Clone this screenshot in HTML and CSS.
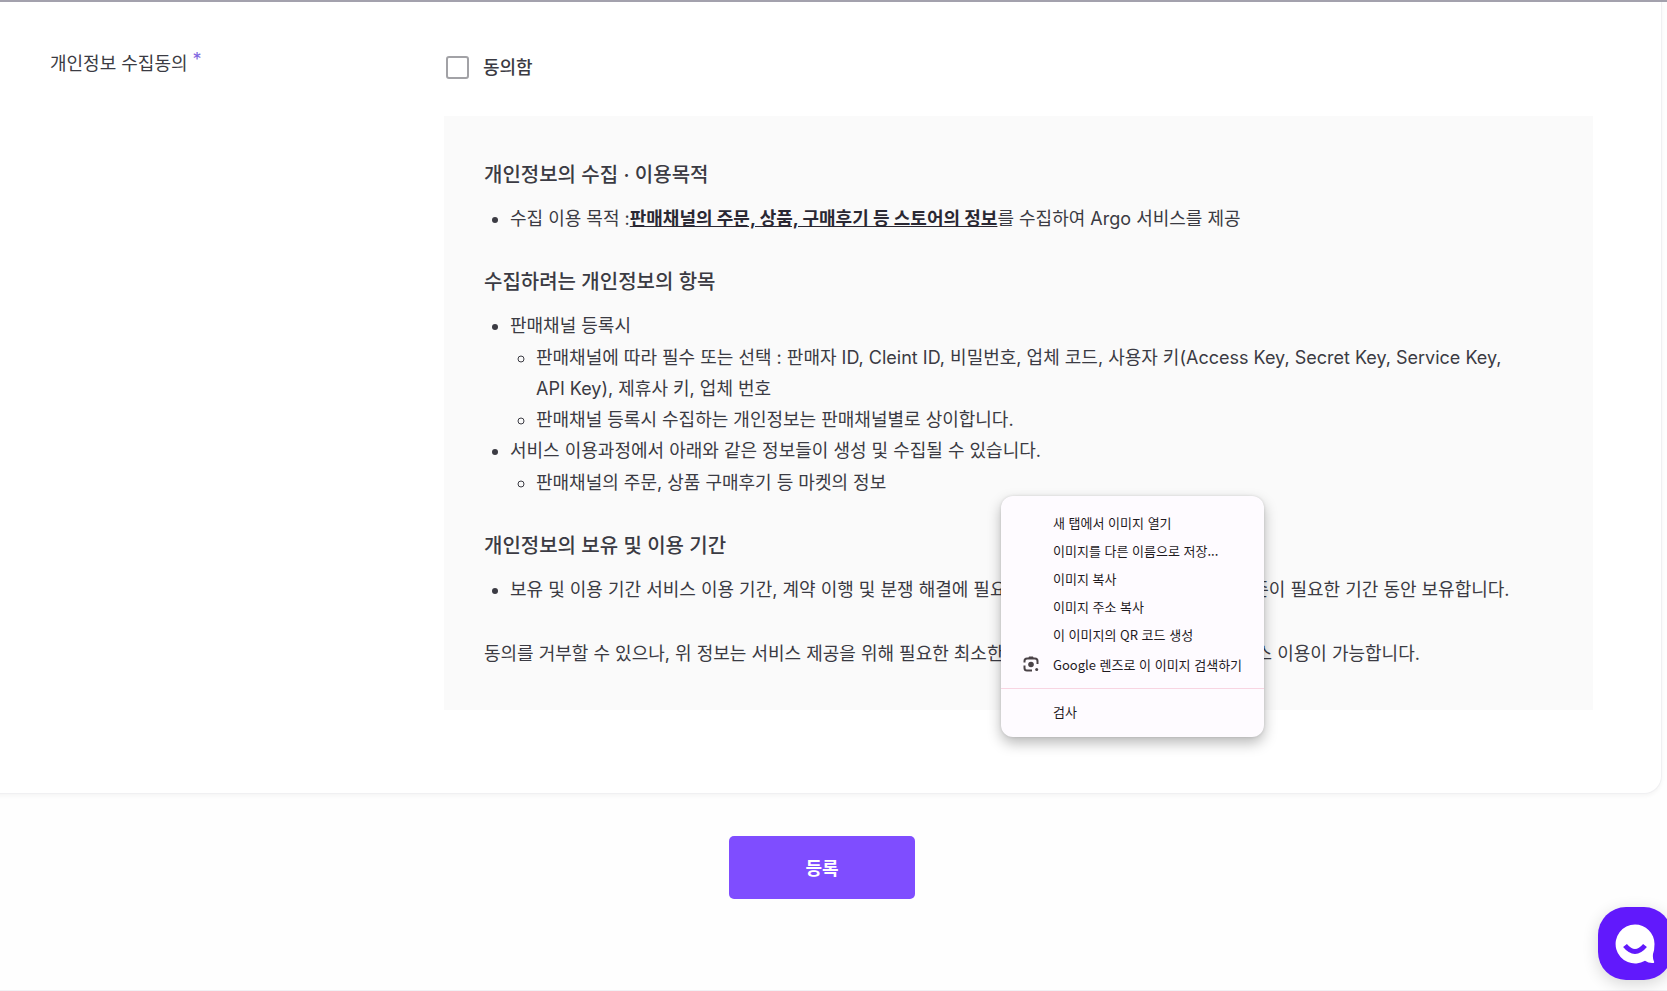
FILE: index.html
```html
<!DOCTYPE html>
<html lang="ko">

<head>
    <meta charset="UTF-8">
    <meta name="viewport" content="width=device-width, initial-scale=1.0">
    <title>판매채널 등록</title>
    <link rel="stylesheet" href="styles.css">
</head>

<body>
    <form class="page">
        <div class="card">
            <div class="row">
                <div class="row-label">개인정보 수집동의 <span class="required">*</span></div>

                <div class="row-content">
                    <div class="agree">
                        <input type="checkbox" id="agree" class="agree-box">
                        <label for="agree">동의함</label>
                    </div>

                    <div class="terms">
                        <h3>개인정보의 수집 · 이용목적</h3>
                        <ul>
                            <li>수집 이용 목적 :<strong>판매채널의 주문, 상품, 구매후기 등 스토어의 정보</strong>를 수집하여 Argo 서비스를 제공</li>
                        </ul>

                        <h3>수집하려는 개인정보의 항목</h3>
                        <ul>
                            <li>판매채널 등록시
                                <ul>
                                    <li>판매채널에 따라 필수 또는 선택 : 판매자 ID, Cleint ID, 비밀번호, 업체 코드, 사용자 키(Access Key, Secret Key, Service Key, API Key), 제휴사 키, 업체 번호</li>
                                    <li>판매채널 등록시 수집하는 개인정보는 판매채널별로 상이합니다.</li>
                                </ul>
                            </li>
                            <li>서비스 이용과정에서 아래와 같은 정보들이 생성 및 수집될 수 있습니다.
                                <ul>
                                    <li>판매채널의 주문, 상품 구매후기 등 마켓의 정보</li>
                                </ul>
                            </li>
                        </ul>

                        <h3>개인정보의 보유 및 이용 기간</h3>
                        <ul>
                            <li>보유 및 이용 기간 서비스 이용 기간, 계약 이행 및 분쟁 해결에 필요한 기간, 관계 법령에 따라 정보보존이 필요한 기간 동안 보유합니다.</li>
                        </ul>

                        <p>동의를 거부할 수 있으나, 위 정보는 서비스 제공을 위해 필요한 최소한의 정보이므로 동의를 하셔야 서비스 이용이 가능합니다.</p>
                    </div>
                </div>
            </div>
        </div>

        <div class="actions">
            <button type="submit" class="submit-btn">등록</button>
        </div>
    </form>

    <div class="context-menu" role="menu">
        <button type="button" role="menuitem">새 탭에서 이미지 열기</button>
        <button type="button" role="menuitem">이미지를 다른 이름으로 저장...</button>
        <button type="button" role="menuitem">이미지 복사</button>
        <button type="button" role="menuitem">이미지 주소 복사</button>
        <button type="button" role="menuitem">이 이미지의 QR 코드 생성</button>
        <button type="button" role="menuitem" class="with-icon">
            <svg class="lens-icon" width="16" height="16" viewBox="0 0 16 16" fill="none" stroke="#4a4347" stroke-width="2">
                <path d="M1.500 6.500V5Q1.500 2.500 4 2.500H12Q14.500 2.500 14.500 5V8M1.500 9.500V12Q1.500 14.500 4 14.500H9" />
                <path d="M5 3L6 0.500H10L11 3Z" fill="#4a4347" stroke="none" />
                <circle cx="8" cy="8.500" r="2.800" fill="#4a4347" stroke="none" />
                <circle cx="13.700" cy="13.500" r="1.500" fill="#4a4347" stroke="none" />
            </svg>
            Google 렌즈로 이 이미지 검색하기
        </button>
        <hr>
        <button type="button" role="menuitem">검사</button>
    </div>

    <button type="button" class="chat-btn" aria-label="채팅 상담">
        <svg width="40" height="40" viewBox="0 0 40 40">
            <path d="M20 0.500A19.500 19.500 0 1 0 30 36.800Q34 39.500 38.500 39Q39.500 38.600 39 37.500Q37.500 34.500 38 30Q39.500 26 39.500 20A19.500 19.500 0 0 0 20 0.500Z" fill="#fff" />
            <path d="M10 21.500Q20 33.500 30 21.500" fill="none" stroke="#6119fc" stroke-width="5" />
        </svg>
    </button>
</body>

</html>
```
FILE: styles.css
```css
* {
    box-sizing: border-box;
}

body {
    margin: 0;
    min-height: 100vh;
    border-top: 2px solid #a3a1ad;
    border-bottom: 1px solid #f1f1f4;
    background-color: #fefefe;
    color: #3b3b43;
    font-family: Inter, "Noto Sans CJK KR", sans-serif;
    font-size: 18px;
    line-height: 31px;
    overflow-x: hidden;
}

.page {
    margin: 0 5px 0 -18px;
}

.card {
    padding: 48px 68px 83px 67px;
    border: 1px solid #f0f0f2;
    border-top: none;
    border-radius: 0 0 18px 18px;
    background-color: #fff;
    box-shadow: 0 2px 4px rgba(0, 0, 0, 0.04);
}

.row {
    display: grid;
    grid-template-columns: 394px 1fr;
}

.row-label {
    line-height: 28px;
}

.required {
    color: #8066e0;
    vertical-align: 4px;
    line-height: 1;
}

.agree {
    display: flex;
    align-items: center;
    gap: 14px;
    height: 35px;
    padding-left: 2px;
    font-weight: 500;
}

.agree-box {
    appearance: none;
    width: 23px;
    height: 23px;
    margin: 0;
    border: 2px solid #a2a2a6;
    border-radius: 3px;
    background-color: #fff;
}

.terms {
    margin-top: 31px;
    padding: 44px 60px 41px 40px;
    background-color: #fafafa;
}

.terms h3 {
    margin: 0 0 12px;
    font-size: 20px;
    font-weight: 500;
    line-height: 31px;
}

.terms ul {
    margin: 0;
    padding-left: 26px;
}

.terms > ul {
    margin-bottom: 33px;
}

.terms li > ul {
    margin-top: 1px;
}

.terms p {
    margin: 0;
}

.terms strong {
    color: #2a2833;
    font-weight: 700;
    text-decoration: underline;
}

.actions {
    display: flex;
    justify-content: center;
    padding: 42px 0 90px;
}

.submit-btn {
    width: 186px;
    height: 63px;
    padding: 0 0 2px;
    border: none;
    border-radius: 5px;
    background-color: #7f4dff;
    color: #fff;
    font-family: inherit;
    font-size: 18px;
    font-weight: 700;
    cursor: pointer;
}

/* context menu over the page */
.context-menu {
    position: absolute;
    left: 1001px;
    top: 496px;
    padding: 12px 0;
    border-radius: 12px;
    background-color: #fefbff;
    box-shadow: 0 6px 14px rgba(0, 0, 0, 0.28), 0 0 3px rgba(0, 0, 0, 0.12);
}

.context-menu button {
    display: flex;
    align-items: center;
    width: 100%;
    height: 28px;
    padding: 0 22px 0 52px;
    border: none;
    background: none;
    color: #1f1a1e;
    font-family: "Noto Sans CJK KR", sans-serif;
    font-size: 13px;
    white-space: nowrap;
}

.context-menu .with-icon {
    gap: 14px;
    height: 32px;
    padding-left: 22px;
}

.context-menu hr {
    margin: 8px 0;
    border: none;
    border-top: 1px solid #f8d5e2;
}

.chat-btn {
    position: fixed;
    right: -5px;
    bottom: 11px;
    display: flex;
    align-items: center;
    justify-content: center;
    width: 74px;
    height: 73px;
    padding: 0;
    border: none;
    border-radius: 28px;
    background-color: #6119fc;
    box-shadow: 0 4px 16px rgba(0, 0, 0, 0.16);
}
```
